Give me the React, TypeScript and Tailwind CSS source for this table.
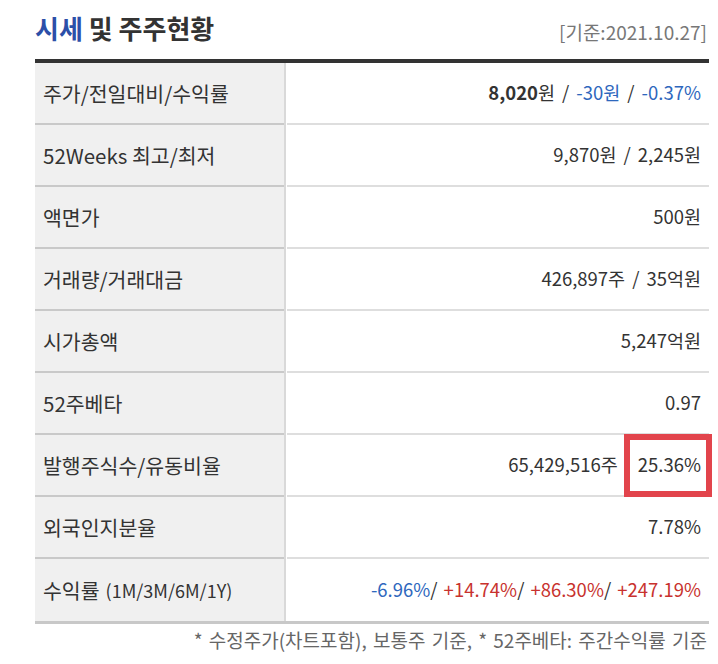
import React from "react";

type Row = { label: React.ReactNode; value: React.ReactNode; boxed?: boolean };

const blue = "text-[#2e67bd]";
const red = "text-[#c8322e]";
const sep = "mx-[7px]";

const rows: Row[] = [
  {
    label: "주가/전일대비/수익률",
    value: (
      <>
        <span className="font-bold">8,020</span>원<span className={sep}>/</span>
        <span className={blue}>-30원</span>
        <span className={sep}>/</span>
        <span className={blue}>-0.37%</span>
      </>
    ),
  },
  { label: "52Weeks 최고/최저", value: <>9,870원<span className={sep}>/</span>2,245원</> },
  { label: "액면가", value: "500원" },
  { label: "거래량/거래대금", value: <>426,897주<span className={sep}>/</span>35억원</> },
  { label: "시가총액", value: "5,247억원" },
  { label: "52주베타", value: "0.97" },
  {
    label: "발행주식수/유동비율",
    value: (
      <>
        65,429,516주<span className="inline-block w-[20px]" />25.36%
      </>
    ),
    boxed: true,
  },
  { label: "외국인지분율", value: "7.78%" },
  {
    label: (
      <>
        수익률<span className="ml-[6px] text-[18px]">(1M/3M/6M/1Y)</span>
      </>
    ),
    value: (
      <>
        <span className={blue}>-6.96%</span>/
        <span className={`${red} ml-[6px]`}>+14.74%</span>/
        <span className={`${red} ml-[6px]`}>+86.30%</span>/
        <span className={`${red} ml-[6px]`}>+247.19%</span>
      </>
    ),
  },
];

export default function App() {
  return (
    <div
      className="w-[718px] h-[664px] bg-white text-[#333] pl-[35px] pr-[9px]"
      style={{ fontFamily: '"Noto Sans CJK KR", "Noto Sans", sans-serif' }}
    >
      <div className="flex items-end justify-between h-[59px] pb-[18px]">
        <h2 className="text-[26px] font-bold leading-none">
          <span className="text-[#2c4fa8]">시세</span> 및 주주현황
        </h2>
        <span className="text-[19px] text-[#777] leading-none mr-[2px]">[기준:2021.10.27]</span>
      </div>

      <div className="border-t-4 border-[#333] border-b-[3px] border-b-[#c8c8c8]">
        {rows.map((row, i) => (
          <div key={i} className="flex h-[62px]">
            <div
              className={`w-[249px] bg-[#f0f0f0] flex items-center pl-[8px] text-[20.5px] ${
                i < rows.length - 1 ? "border-b-2 border-[#c9c9c9]" : ""
              }`}
            >
              {row.label}
            </div>
            <div className="w-[2px] bg-[#d9d9d9]" />
            <div className="flex-1 pl-[1px]">
              <div
                className={`relative h-full flex items-center justify-end pr-[8px] text-[18.5px] ${
                  i < rows.length - 1 ? "border-b-2 border-[#dedede]" : ""
                }`}
              >
                {row.value}
                {row.boxed && (
                  <div className="absolute right-[-3px] top-[-1px] w-[88px] h-[63px] border-[6px] border-[#e2444c]" />
                )}
              </div>
            </div>
          </div>
        ))}
      </div>

      <p className="text-right text-[19px] text-[#666] mt-[2px] mr-[2px] leading-[28px] [word-spacing:2px]">
        * 수정주가(차트포함), 보통주 기준, * 52주베타: 주간수익률 기준
      </p>
    </div>
  );
}
